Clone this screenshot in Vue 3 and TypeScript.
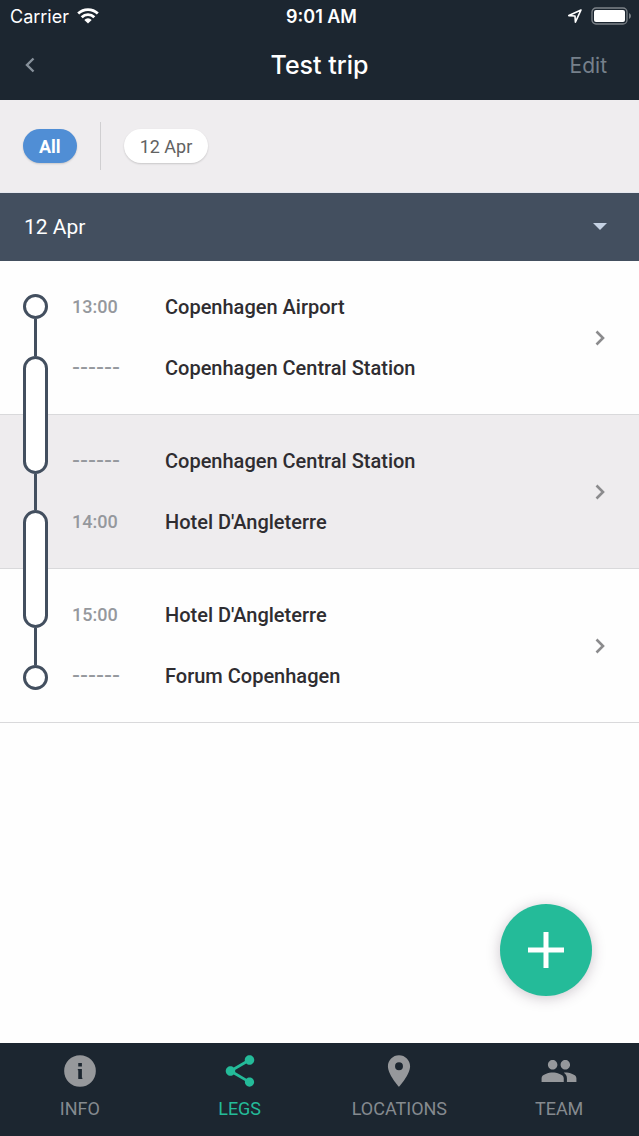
<script setup lang="ts">
import { ref } from 'vue'

interface Stop {
  time: string | null
  place: string
}

interface Leg {
  id: number
  stops: Stop[]
}

interface Tab {
  label: string
  icon: string
}

const legs: Leg[] = [
  {
    id: 1,
    stops: [
      { time: '13:00', place: 'Copenhagen Airport' },
      { time: null, place: 'Copenhagen Central Station' },
    ],
  },
  {
    id: 2,
    stops: [
      { time: null, place: 'Copenhagen Central Station' },
      { time: '14:00', place: "Hotel D'Angleterre" },
    ],
  },
  {
    id: 3,
    stops: [
      { time: '15:00', place: "Hotel D'Angleterre" },
      { time: null, place: 'Forum Copenhagen' },
    ],
  },
]

const tabs: Tab[] = [
  {
    label: 'INFO',
    icon: 'M12 2a10 10 0 1 0 0 20a10 10 0 1 0 0-20zM10.900 7h2.300v2.100h-2.300zM10.600 10.800h2.600v5.400h.3v.8h-2.600v-5.400h-.3z',
  },
  {
    label: 'LEGS',
    icon: 'M18 16.08c-.76 0-1.44.3-1.96.77L8.91 12.7c.05-.23.09-.46.09-.7s-.04-.47-.09-.7l7.05-4.11c.54.5 1.25.81 2.04.81 1.66 0 3-1.34 3-3s-1.34-3-3-3-3 1.34-3 3c0 .24.04.47.09.7L8.04 9.81C7.5 9.31 6.79 9 6 9c-1.66 0-3 1.34-3 3s1.34 3 3 3c.79 0 1.5-.31 2.04-.81l7.12 4.16c-.05.21-.08.43-.08.65 0 1.61 1.31 2.92 2.92 2.92s2.92-1.31 2.92-2.92-1.31-2.92-2.92-2.92z',
  },
  {
    label: 'LOCATIONS',
    icon: 'M12 2C8.13 2 5 5.13 5 9c0 5.25 7 13 7 13s7-7.75 7-13c0-3.87-3.13-7-7-7zm0 9.5a2.5 2.5 0 0 1 0-5 2.5 2.5 0 0 1 0 5z',
  },
  {
    label: 'TEAM',
    icon: 'M16 11c1.66 0 2.99-1.34 2.99-3S17.66 5 16 5c-1.66 0-3 1.34-3 3s1.34 3 3 3zm-8 0c1.66 0 2.99-1.34 2.99-3S9.66 5 8 5C6.34 5 5 6.34 5 8s1.34 3 3 3zm0 2c-2.33 0-7 1.17-7 3.5V19h14v-2.5c0-2.33-4.67-3.5-7-3.5zm8 0c-.29 0-.62.02-.97.05 1.16.84 1.97 1.97 1.97 3.45V19h6v-2.5c0-2.33-4.67-3.5-7-3.5z',
  },
]

const filters = ['All', '12 Apr']
const activeFilter = ref('All')
const activeTab = ref('LEGS')
const expanded = ref(true)
</script>

<template>
  <div class="screen">
    <header class="top">
      <div class="status">
        <div class="carrier">
          <span>Carrier</span>
          <svg class="wifi" viewBox="0 0 22 16" aria-hidden="true">
            <path d="M1.2 5.6a14 14 0 0 1 19.6 0" />
            <path d="M4.7 9.2a9 9 0 0 1 12.6 0" />
            <path class="solid" d="M11 15.6L7.3 11.9a5.2 5.2 0 0 1 7.4 0z" />
          </svg>
        </div>
        <span class="clock">9:01 AM</span>
        <div class="indicators">
          <svg class="arrow" viewBox="0 0 16 16" aria-hidden="true">
            <path d="M14 2L1.8 7.6L8 8L8.4 14.2z" />
          </svg>
          <svg class="battery" viewBox="0 0 42 18" aria-hidden="true">
            <rect class="shell" x="1" y="1" width="35" height="16" rx="4" />
            <rect class="charge" x="3" y="3" width="31" height="12" rx="2" />
            <path class="tip" d="M38 6q2 1 2 3t-2 3z" />
          </svg>
        </div>
      </div>
      <div class="navbar">
        <button class="back" type="button" aria-label="Back">
          <svg viewBox="0 0 10 16" aria-hidden="true"><path d="M8.500 1.500L2 8L8.500 14.500" /></svg>
        </button>
        <h1>Test trip</h1>
        <button class="edit" type="button">Edit</button>
      </div>
    </header>

    <div class="filters">
      <template v-for="(name, i) in filters" :key="name">
        <span v-if="i === 1" class="divider"></span>
        <button
          type="button"
          class="chip"
          :class="{ active: activeFilter === name }"
          @click="activeFilter = name"
        >{{ name }}</button>
      </template>
    </div>

    <button class="day" type="button" :aria-expanded="expanded" @click="expanded = !expanded">
      <span>12 Apr</span>
      <svg viewBox="0 0 14 8" aria-hidden="true"><path d="M0 0h14L7 7z" /></svg>
    </button>

    <main>
      <div v-if="expanded" class="legs">
        <a v-for="leg in legs" :key="leg.id" class="leg" href="#">
          <div class="stops">
            <div v-for="stop in leg.stops" :key="stop.place" class="stop">
              <span v-if="stop.time" class="time">{{ stop.time }}</span>
              <span v-else class="time unset">------</span>
              <span class="place">{{ stop.place }}</span>
            </div>
          </div>
          <svg class="chevron" viewBox="0 0 10 16" aria-hidden="true"><path d="M1.500 1.500L8 8L1.500 14.500" /></svg>
        </a>
        <div class="route" aria-hidden="true">
          <span class="node"></span>
          <template v-for="n in legs.length - 1" :key="n">
            <span class="link"></span>
            <span class="node transfer"></span>
          </template>
          <span class="link"></span>
          <span class="node"></span>
        </div>
      </div>
      <button class="fab" type="button" aria-label="Add leg">
        <svg viewBox="0 0 36 36" aria-hidden="true"><path d="M18 0v36M0 18h36" /></svg>
      </button>
    </main>

    <nav class="tabs">
      <button
        v-for="tab in tabs"
        :key="tab.label"
        type="button"
        class="tab"
        :class="{ current: activeTab === tab.label }"
        @click="activeTab = tab.label"
      >
        <svg viewBox="0 0 24 24" aria-hidden="true"><path fill-rule="evenodd" :d="tab.icon" /></svg>
        <span>{{ tab.label }}</span>
      </button>
    </nav>
  </div>
</template>

<style>
body {
  margin: 0;
}
</style>

<style scoped>
.screen {
  display: flex;
  flex-direction: column;
  min-height: 100vh;
  background: #fefefe;
  font-family: Roboto, "Liberation Sans", sans-serif;
}

button {
  margin: 0;
  padding: 0;
  border: 0;
  background: none;
  font: inherit;
  cursor: pointer;
}

svg {
  display: block;
  flex: none;
}

.top {
  height: 100px;
  background: #1c2630;
  color: #fff;
  font-family: Inter, "Liberation Sans", sans-serif;
}

.status {
  display: grid;
  grid-template-columns: 1fr auto 1fr;
  align-items: center;
  height: 32px;
  padding: 0 6px 0 10px;
  font-size: 18px;
}

.carrier,
.indicators {
  display: flex;
  align-items: center;
  gap: 8px;
}

.indicators {
  justify-content: flex-end;
}

.clock {
  font-weight: 600;
}

.wifi {
  width: 22px;
  height: 16px;
  fill: none;
  stroke: #fff;
  stroke-width: 2.8;
}

.wifi .solid {
  fill: #fff;
  stroke: none;
}

.arrow {
  width: 16px;
  height: 16px;
  fill: none;
  stroke: #fff;
  stroke-width: 1.6;
  stroke-linejoin: round;
}

.battery {
  width: 42px;
  height: 18px;
}

.shell {
  fill: none;
  stroke: #7c8288;
  stroke-width: 1.3;
}

.charge {
  fill: #fff;
}

.tip {
  fill: #7c8288;
}

.navbar {
  display: grid;
  grid-template-columns: 1fr auto 1fr;
  align-items: center;
  height: 66px;
  padding: 0 24px;
}

.back svg {
  width: 12px;
  height: 16px;
  fill: none;
  stroke: #87919b;
  stroke-width: 2.4;
}

h1 {
  margin: 0;
  font-size: 25px;
  font-weight: 500;
}

.edit {
  justify-self: end;
  padding: 0 8px;
  color: #76808b;
  font-size: 21px;
}

.filters {
  display: flex;
  align-items: center;
  gap: 23px;
  height: 92px;
  padding: 0 23px;
  background: #efedef;
  border-bottom: 1px solid #e6e8ef;
}

.chip {
  height: 34px;
  padding: 0 16px;
  border-radius: 17px;
  background: #fff;
  color: #626262;
  font-size: 18px;
  box-shadow: 0 1px 2px rgba(0, 0, 0, 0.16);
}

.chip.active {
  background: #508ed5;
  color: #fff;
  font-weight: 700;
}

.divider {
  width: 1px;
  height: 48px;
  background: #d0cfd1;
}

.day {
  display: flex;
  align-items: center;
  justify-content: space-between;
  height: 68px;
  padding: 0 32px 0 24px;
  background: #434f5f;
  color: #fff;
  font-size: 21px;
}

.day svg {
  width: 14px;
  height: 8px;
  fill: #c5d2e3;
}

main {
  position: relative;
  flex: 1;
}

.legs {
  position: relative;
}

.leg {
  display: flex;
  align-items: center;
  justify-content: space-between;
  padding: 31px 34px 31px 72px;
  border-bottom: 1px solid #d9d9db;
  color: #2f2d31;
  text-decoration: none;
}

.leg:nth-child(even) {
  background: #eeecee;
}

.stops {
  display: grid;
  gap: 31px;
}

.stop {
  display: grid;
  grid-template-columns: 93px auto;
  line-height: 30px;
  font-size: 20px;
}

.time {
  color: #95989d;
  font-size: 18px;
  font-weight: 500;
}

.time.unset {
  font-family: "Liberation Sans", sans-serif;
  font-size: 24px;
  font-weight: 400;
  line-height: 25px;
}

.place {
  font-weight: 500;
}

.chevron {
  width: 10px;
  height: 16px;
  fill: none;
  stroke: #8b8b8d;
  stroke-width: 2.6;
}

.route {
  position: absolute;
  top: 33px;
  bottom: 33px;
  left: 23px;
  display: flex;
  flex-direction: column;
  align-items: center;
}

.node {
  box-sizing: border-box;
  width: 25px;
  height: 25px;
  border: 3px solid #434f5f;
  border-radius: 13px;
  background: #fff;
}

.transfer {
  height: 118px;
}

.link {
  flex: 1;
  width: 3px;
  background: #434f5f;
}

.fab {
  position: absolute;
  right: 47px;
  bottom: 47px;
  display: grid;
  place-items: center;
  width: 92px;
  height: 92px;
  border-radius: 50%;
  background: #24bb99;
  box-shadow: 0 2px 14px rgba(60, 40, 60, 0.26);
}

.fab svg {
  width: 36px;
  height: 36px;
  stroke: #fff;
  stroke-width: 5;
}

.tabs {
  display: flex;
  height: 93px;
  background: #1c2630;
}

.tab {
  flex: 1;
  display: flex;
  flex-direction: column;
  align-items: center;
  gap: 8px;
  padding-top: 9px;
  color: #858a8f;
  font-size: 18px;
  line-height: 22px;
}

.tab svg {
  width: 38px;
  height: 38px;
  fill: #96989b;
}

.tab.current {
  color: #24bb99;
}

.tab.current svg {
  fill: #24bb99;
}
</style>
